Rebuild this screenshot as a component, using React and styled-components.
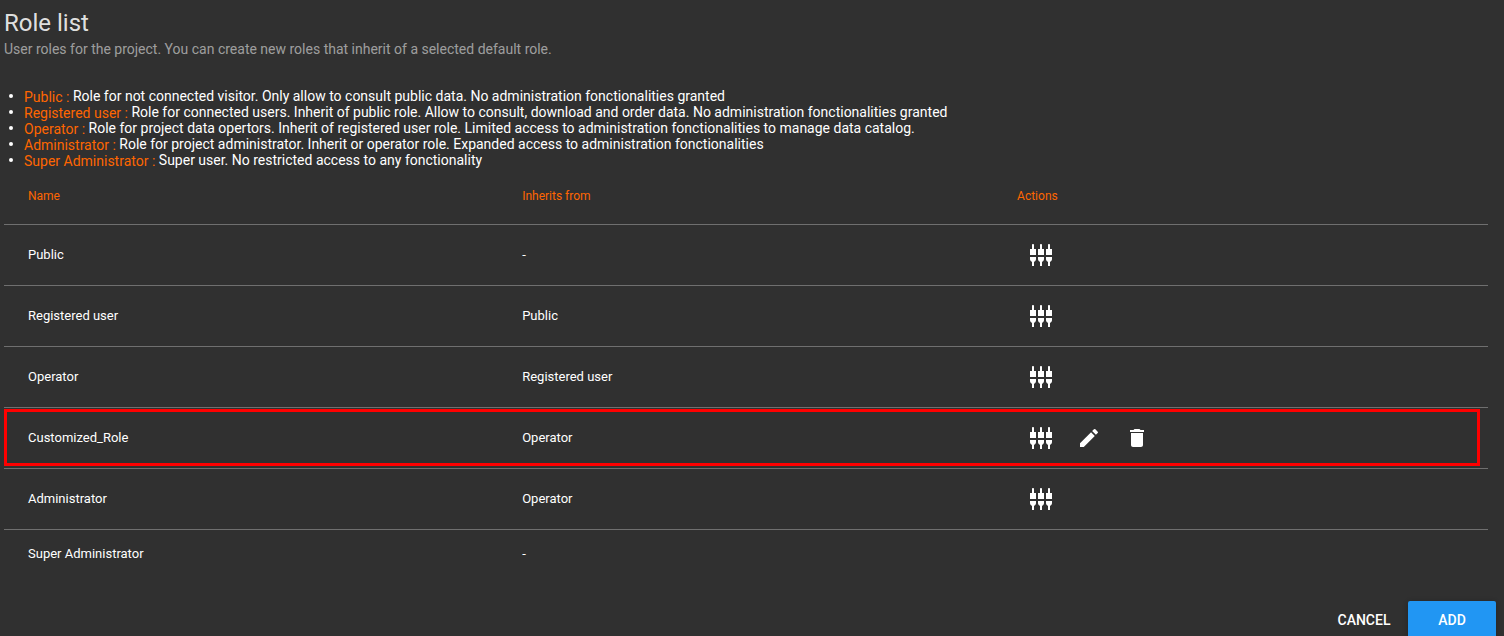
import React from "react";
import styled, { createGlobalStyle, css } from "styled-components";
import { MdSettingsInputComponent, MdCreate, MdDelete } from "react-icons/md";

const ACCENT = "#ff6600";

const GlobalStyle = createGlobalStyle`
  html { background: #303030; overflow: hidden; }
  body {
    margin: 0;
    background: #303030;
    color: #fff;
    font-family: Roboto, sans-serif;
  }
`;

const Page = styled.main`
  display: flex;
  flex-direction: column;
  padding: 8px 16px 0 4px;
`;

const Title = styled.h1`
  margin: 0;
  font-size: 24px;
  line-height: 30px;
  font-weight: 400;
  color: rgba(255, 255, 255, 0.87);
`;

const Subtitle = styled.p`
  margin: 0;
  font-size: 14px;
  line-height: 22px;
  color: rgba(255, 255, 255, 0.54);
`;

const RoleNotes = styled.ul`
  margin: 28px 0 0;
  padding: 0;
  list-style: none;
  font-size: 14px;
  line-height: 16px;
`;

const RoleNote = styled.li`
  display: flex;
  height: 16px;

  &::before {
    content: "";
    width: 4px;
    height: 4px;
    margin: 6px 11px 0 5px;
    border-radius: 50%;
    background: #fff;
  }
`;

const RoleTerm = styled.span`
  color: ${ACCENT};
  vertical-align: -1px;
`;

const Table = styled.table`
  width: 100%;
  table-layout: fixed;
  border-collapse: separate;
  border-spacing: 0;
`;

const cell = css`
  padding: 0 24px;
  text-align: left;
  border-bottom: 1px solid ${(p) => (p.$last ? "transparent" : "#6f6f6f")};
`;

const HeadCell = styled.th`
  ${cell}
  width: ${(p) => p.$width};
  box-sizing: border-box;
  height: 57px;
  font-size: 12px;
  font-weight: 400;
  color: ${ACCENT};
`;

const Row = styled.tr`
  position: relative;
`;

const Cell = styled.td`
  ${cell}
  box-sizing: border-box;
  height: ${(p) => (p.$last ? 49 : 61)}px;
  font-size: 13px;
`;

const TextCell = styled(Cell)`
  padding-bottom: 2px;
`;

const Highlight = styled.span`
  position: absolute;
  inset: 1px 8px 3px 0;
  border: 3px solid #f00;
  pointer-events: none;
`;

const Actions = styled.div`
  display: flex;
`;

const IconButton = styled.button`
  display: flex;
  padding: 12px;
  border: 0;
  background: none;
  color: #fff;
  cursor: pointer;

  svg {
    width: 24px;
    height: 24px;
  }
`;

const Footer = styled.footer`
  display: flex;
  justify-content: flex-end;
  margin: 22px -8px 0 0;
`;

const Button = styled.button`
  min-width: 88px;
  height: 38px;
  padding: 0 16px;
  border: 0;
  border-radius: 2px;
  background: ${(p) => (p.$primary ? "#2196f3" : "transparent")};
  box-shadow: ${(p) =>
    p.$primary ? "0 1px 6px rgba(0,0,0,.12), 0 1px 4px rgba(0,0,0,.12)" : "none"};
  color: #fff;
  font: 500 14px/38px Roboto, sans-serif;
  text-transform: uppercase;
  cursor: pointer;
`;

const notes = [
  ["Public", "Role for not connected visitor. Only allow to consult public data. No administration fonctionalities granted"],
  ["Registered user", "Role for connected users. Inherit of public role. Allow to consult, download and order data. No administration fonctionalities granted"],
  ["Operator", "Role for project data opertors. Inherit of registered user role. Limited access to administration fonctionalities to manage data catalog."],
  ["Administrator", "Role for project administrator. Inherit or operator role. Expanded access to administration fonctionalities"],
  ["Super Administrator", "Super user. No restricted access to any fonctionality"],
];

const roles = [
  { name: "Public", parent: "-", configurable: true },
  { name: "Registered user", parent: "Public", configurable: true },
  { name: "Operator", parent: "Registered user", configurable: true },
  { name: "Customized_Role", parent: "Operator", configurable: true, custom: true },
  { name: "Administrator", parent: "Operator", configurable: true },
  { name: "Super Administrator", parent: "-" },
];

function RoleRow({ role, last }) {
  return (
    <Row>
      <TextCell $last={last}>
        {role.name}
        {role.custom && <Highlight />}
      </TextCell>
      <TextCell $last={last}>{role.parent}</TextCell>
      <Cell $last={last}>
        <Actions>
          {role.configurable && (
            <IconButton type="button" aria-label={`Manage access of ${role.name}`}>
              <MdSettingsInputComponent />
            </IconButton>
          )}
          {role.custom && (
            <>
              <IconButton type="button" aria-label={`Edit ${role.name}`}>
                <MdCreate />
              </IconButton>
              <IconButton type="button" aria-label={`Delete ${role.name}`}>
                <MdDelete />
              </IconButton>
            </>
          )}
        </Actions>
      </Cell>
    </Row>
  );
}

export default function App() {
  return (
    <>
      <GlobalStyle />
      <Page>
        <Title>Role list</Title>
        <Subtitle>
          User roles for the project. You can create new roles that inherit of a selected default role.
        </Subtitle>
        <RoleNotes>
          {notes.map(([term, text]) => (
            <RoleNote key={term}>
              <span>
                <RoleTerm>{term} :</RoleTerm> {text}
              </span>
            </RoleNote>
          ))}
        </RoleNotes>
        <Table>
          <thead>
            <tr>
              <HeadCell scope="col" $width="33.3%">Name</HeadCell>
              <HeadCell scope="col" $width="33.35%">Inherits from</HeadCell>
              <HeadCell scope="col">Actions</HeadCell>
            </tr>
          </thead>
          <tbody>
            {roles.map((role, i) => (
              <RoleRow key={role.name} role={role} last={i === roles.length - 1} />
            ))}
          </tbody>
        </Table>
        <Footer>
          <Button type="button">Cancel</Button>
          <Button type="button" $primary>Add</Button>
        </Footer>
      </Page>
    </>
  );
}
